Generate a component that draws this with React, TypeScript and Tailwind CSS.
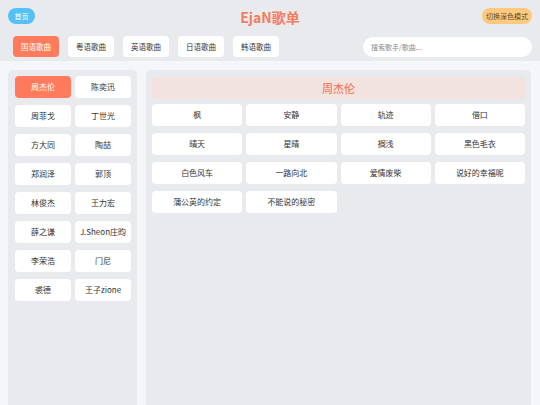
import React, { useState } from 'react'

const tabs = ['国语歌曲', '粤语歌曲', '英语歌曲', '日语歌曲', '韩语歌曲']

const singers = [
  '周杰伦', '陈奕迅', '周菲戈', '丁世光', '方大同', '陶喆', '郑润泽', '郭顶',
  '林俊杰', '王力宏', '薛之谦', 'J.Sheon庄昀', '李荣浩', '门尼', '裘德', '王子zione',
]

const songs = [
  '枫', '安静', '轨迹', '借口', '晴天', '星晴', '搁浅', '黑色毛衣',
  '白色风车', '一路向北', '爱情废柴', '说好的幸福呢', '蒲公英的约定', '不能说的秘密',
]

export default function App() {
  const [tab, setTab] = useState(0)
  const [singer, setSinger] = useState(0)

  return (
    <div
      className="h-[405px] w-[540px] overflow-hidden flex flex-col bg-[#f5f6f9] text-[#333]"
      style={{ fontFamily: '"Noto Sans CJK SC", "Noto Sans", sans-serif' }}
    >
      {/* Header */}
      <div className="bg-[#e9eaee] px-2 pt-2 h-[61px] flex flex-col">
        <div className="flex items-center h-4">
          <div className="flex-1 flex">
            <button className="h-4 w-[27px] rounded-full bg-[#54c0f5] text-white text-[7px] leading-none">
              首页
            </button>
          </div>
          <div className="text-[14px] font-bold text-[#f47d5e] leading-none pt-[2px]">EjaN歌单</div>
          <div className="flex-1 flex justify-end">
            <button className="h-4 w-[50px] rounded-full bg-[#fdc97c] text-[#5a4a2e] text-[7px] leading-none">
              切换深色模式
            </button>
          </div>
        </div>
        <div className="flex items-center justify-between mt-3 pl-[5px]">
          <div className="flex gap-[9px]">
            {tabs.map((t, i) => (
              <button
                key={t}
                onClick={() => setTab(i)}
                className={`h-[21px] w-[46px] rounded text-[7.5px] leading-none ${
                  tab === i ? 'bg-[#ff7b5c] text-white' : 'bg-white text-[#333]'
                }`}
              >
                {t}
              </button>
            ))}
          </div>
          <input
            placeholder="搜索歌手/歌曲..."
            className="h-5 w-[169px] rounded-full bg-white px-2 text-[7px] outline-none placeholder:text-[#888]"
          />
        </div>
      </div>

      {/* Body */}
      <div className="flex-1 flex gap-[9px] pl-2 pr-[9px] pt-[9px]">
        <div className="w-[129px] bg-[#e9eaee] rounded-t-[5px] pl-[7px] pr-[6px] pt-[6px]">
          <div className="grid grid-cols-2 gap-x-1 gap-y-[7px]">
            {singers.map((s, i) => (
              <button
                key={s}
                onClick={() => setSinger(i)}
                className={`h-[22px] rounded text-[8px] leading-none ${
                  singer === i ? 'bg-[#ff7b5c] text-white' : 'bg-white text-[#333]'
                }`}
              >
                {s}
              </button>
            ))}
          </div>
        </div>

        <div className="flex-1 bg-[#e9eaee] rounded-t-[5px] px-[6px] pt-[7px]">
          <div className="h-[22px] rounded bg-[#f2e3e1] flex items-center justify-center text-[11px] font-medium text-[#f47d5e]">
            {singers[singer]}
          </div>
          <div className="grid grid-cols-4 gap-x-1 gap-y-[7px] mt-[5px]">
            {songs.map((s) => (
              <button key={s} className="h-[22px] rounded bg-white text-[8px] leading-none text-[#333]">
                {s}
              </button>
            ))}
          </div>
        </div>
      </div>
    </div>
  )
}
